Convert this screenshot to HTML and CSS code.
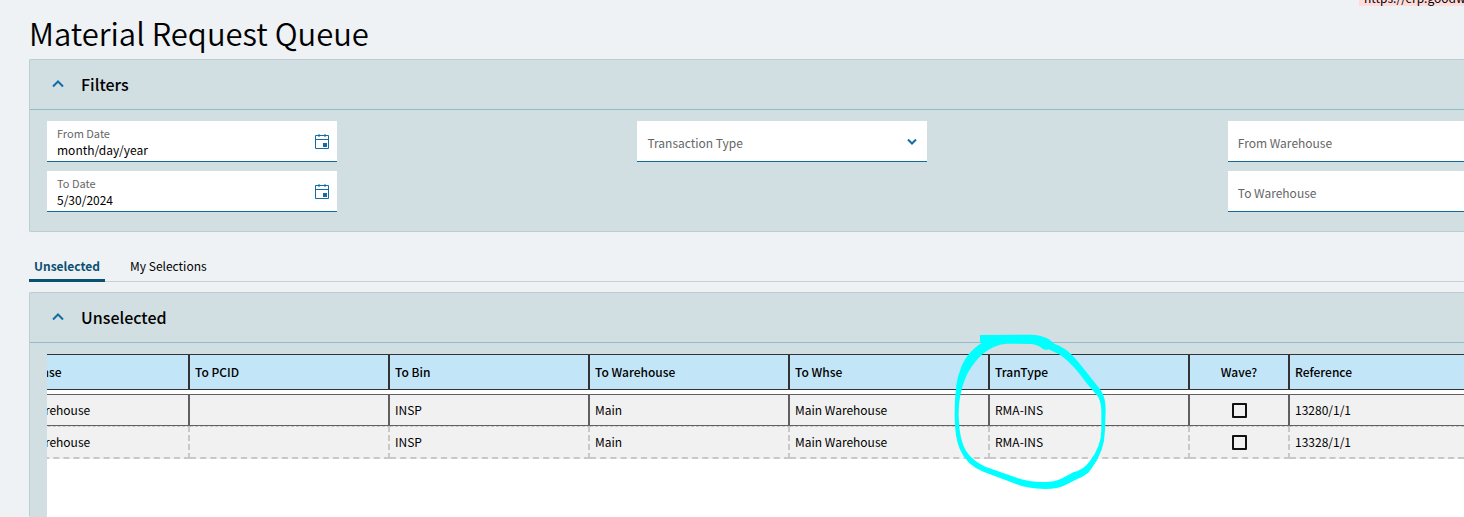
FILE: index.html
```html
<!DOCTYPE html>
<html lang="en">
<head>
  <meta charset="UTF-8">
  <title>Material Request Queue</title>
  <link rel="stylesheet" href="styles.css">
</head>
<body>
  <div class="env-banner">https://erp.goodway</div>

  <main class="page">
    <h1>Material Request Queue</h1>

    <!-- Filters -->
    <section class="panel">
      <header class="panel-header">
        <button type="button" class="collapse-btn" aria-label="Collapse Filters">
          <svg width="12" height="8" viewBox="0 0 12 8"><path d="M1 6.5 6 1.5 11 6.5"/></svg>
        </button>
        <h2>Filters</h2>
      </header>
      <form class="filters">
        <div class="filter-col">
          <div class="field">
            <label for="fromDate">From Date</label>
            <input type="text" id="fromDate" value="month/day/year">
            <button type="button" class="field-btn" aria-label="Pick from date">
              <svg width="14" height="15" viewBox="0 0 14 15"><path d="M.5 1.5h13v13H.5zM.5 5.5h13M4 0v3M10 0v3"/><rect x="8" y="9" width="4" height="4"/></svg>
            </button>
          </div>
          <div class="field">
            <label for="toDate">To Date</label>
            <input type="text" id="toDate" value="5/30/2024">
            <button type="button" class="field-btn" aria-label="Pick to date">
              <svg width="14" height="15" viewBox="0 0 14 15"><path d="M.5 1.5h13v13H.5zM.5 5.5h13M4 0v3M10 0v3"/><rect x="8" y="9" width="4" height="4"/></svg>
            </button>
          </div>
        </div>
        <div class="filter-col">
          <div class="field field-empty">
            <select id="tranType" aria-label="Transaction Type">
              <option>Transaction Type</option>
            </select>
            <svg class="caret" width="10" height="6" viewBox="0 0 10 6"><path d="M1 .5 5 4.5 9 .5"/></svg>
          </div>
        </div>
        <div class="filter-col filter-col-last">
          <div class="field field-empty">
            <input type="text" id="fromWarehouse" placeholder="From Warehouse" aria-label="From Warehouse">
          </div>
          <div class="field field-empty">
            <input type="text" id="toWarehouse" placeholder="To Warehouse" aria-label="To Warehouse">
          </div>
        </div>
      </form>
    </section>

    <!-- Tabs -->
    <nav class="tabs">
      <a href="#unselected" class="tab active">Unselected</a>
      <a href="#my-selections" class="tab">My Selections</a>
    </nav>

    <!-- Grid -->
    <section class="panel panel-fill" id="unselected">
      <header class="panel-header">
        <button type="button" class="collapse-btn" aria-label="Collapse Unselected">
          <svg width="12" height="8" viewBox="0 0 12 8"><path d="M1 6.5 6 1.5 11 6.5"/></svg>
        </button>
        <h2>Unselected</h2>
      </header>
      <div class="grid">
        <table>
          <colgroup>
            <col class="col-first"><col class="col"><col class="col"><col class="col"><col class="col"><col class="col">
            <col class="col-check"><col>
          </colgroup>
          <thead>
            <tr>
              <th>From Whse</th>
              <th>To PCID</th>
              <th>To Bin</th>
              <th>To Warehouse</th>
              <th>To Whse</th>
              <th>TranType</th>
              <th class="center">Wave?</th>
              <th>Reference</th>
            </tr>
          </thead>
          <tbody>
            <tr class="spacer"><td colspan="8"></td></tr>
            <tr class="current">
              <td>Main Warehouse</td>
              <td></td>
              <td>INSP</td>
              <td>Main</td>
              <td>Main Warehouse</td>
              <td>RMA-INS</td>
              <td class="center"><input type="checkbox" aria-label="Wave 13280/1/1"></td>
              <td>13280/1/1</td>
            </tr>
            <tr>
              <td>Main Warehouse</td>
              <td></td>
              <td>INSP</td>
              <td>Main</td>
              <td>Main Warehouse</td>
              <td>RMA-INS</td>
              <td class="center"><input type="checkbox" aria-label="Wave 13328/1/1"></td>
              <td>13328/1/1</td>
            </tr>
          </tbody>
        </table>
      </div>
    </section>
  </main>

  <!-- Marker circle round the TranType column -->
  <svg class="marker" width="200" height="180" viewBox="0 0 600 540">
    <path d="M150 45 300 44Q335 44 357 58L374 72Q410 82 445 126L512 210Q527 232 527 270L525 330Q524 395 484 446Q474 464 442 477L405 496Q385 507 345 507Q290 506 258 492L160 455Q108 434 89 386Q74 350 74 290Q74 190 89 155Q105 100 158 67L150 66ZM230 71Q190 74 155 104Q118 142 106 175Q84 230 86 290Q88 360 108 392Q124 420 166 440L262 474Q300 487 345 486Q372 486 392 477L430 457Q462 448 478 425Q514 380 514 330V270Q512 235 497 222L470 190Q430 132 390 104L356 88Q348 92 338 86Q320 72 300 72Z"/>
  </svg>
</body>
</html>
```
FILE: styles.css
```css
* {
  box-sizing: border-box;
}
body {
  margin: 0;
  background: #eef2f5;
  color: #000;
  font-family: "Noto Sans CJK SC", "Noto Sans", sans-serif;
  font-size: 12px;
  line-height: 16px;
  overflow: hidden;
}
.page {
  display: flex;
  flex-direction: column;
  min-height: 100vh;
  padding-left: 29px;
}
h1 {
  margin: 0;
  padding: 13px 0 6px;
  font-size: 31px;
  line-height: 40px;
  font-weight: 350;
}
h2 {
  margin: 0;
  font-size: 16px;
  line-height: 24px;
  font-weight: 500;
}
.env-banner {
  position: absolute;
  top: 0;
  right: 0;
  display: flex;
  align-items: flex-end;
  width: 105px;
  height: 6px;
  padding-left: 5px;
  overflow: hidden;
  background: #ffdcdc;
  font-size: 12px;
}
.panel {
  background: #d1dee2;
  border: 1px solid #bccdd1;
  border-right: none;
  border-radius: 2px 0 0 2px;
}
.panel-header {
  display: flex;
  align-items: center;
  height: 50px;
  padding: 0 0 1px 18px;
  border-bottom: 1px solid #91bdc6;
}
.collapse-btn {
  display: flex;
  align-items: center;
  justify-content: center;
  width: 20px;
  height: 20px;
  margin-right: 13px;
  padding: 0;
  border: none;
  background: none;
  cursor: pointer;
}
svg path {
  fill: none;
  stroke: #136ca3;
}
.collapse-btn path,
.caret path {
  stroke-width: 2;
}
.filters {
  display: grid;
  grid-template-columns: 5fr 5fr 2fr;
  padding: 11px 0 19px 17px;
}
.filter-col {
  display: flex;
  flex-direction: column;
  gap: 9px;
  width: 290px;
}
.filter-col-last {
  width: auto;
}
.field {
  position: relative;
  display: flex;
  flex-direction: column;
  height: 41px;
  padding: 4px 10px 0;
  background: #fff;
  border-bottom: 1px solid #136c96;
}
.field label {
  margin-bottom: 1px;
  color: #666;
  font-size: 11px;
}
.field input,
.field select {
  width: 100%;
  height: 16px;
  padding: 0;
  border: none;
  outline: none;
  appearance: none;
  background: none;
  color: #000;
  font: inherit;
}
.field-empty input,
.field-empty select {
  height: 34px;
  color: #666;
}
.field-empty select {
  height: 36px;
}
.field-empty input::placeholder {
  color: #666;
  opacity: 1;
}
.field-btn {
  position: absolute;
  top: 13px;
  right: 8px;
  display: flex;
  padding: 0;
  border: none;
  background: none;
  cursor: pointer;
}
.field-btn rect {
  fill: #136ca3;
}
.caret {
  position: absolute;
  top: 18px;
  right: 10px;
  pointer-events: none;
}
.tabs {
  display: flex;
  gap: 20px;
  margin-top: 20px;
  border-bottom: 1px solid #c8d0d4;
}
.tab {
  height: 30px;
  margin-bottom: -1px;
  padding: 6px 5px 0;
  color: #000;
  text-decoration: none;
}
.tab.active {
  border-bottom: 3px solid #0b4f71;
  color: #0b4f71;
  font-weight: 700;
}
.panel-fill {
  display: flex;
  flex-direction: column;
  flex: 1;
  margin-top: 10px;
  border-bottom: none;
}
.grid {
  flex: 1;
  margin: 11px 0 0 17px;
  overflow: hidden;
  background: #fff;
}
/* scrolled sideways, the first column is cut at the left */
table {
  width: calc(100% + 54px);
  margin-left: -54px;
  border-collapse: separate;
  border-spacing: 0;
  table-layout: fixed;
}
.col {
  width: 200px;
}
.col-first {
  width: 197px;
}
.col-check {
  width: 100px;
}
th {
  height: 36px;
  padding: 0 5px;
  background: #c2e5f7;
  border: solid #333;
  border-width: 1px 2px 1px 0;
  font-weight: 500;
  text-align: left;
}
td {
  height: 33px;
  padding: 0 5px;
  background: #f1f1f1;
  border: dashed #c8c8c8;
  border-width: 1px 2px 2px 0;
}
.current td {
  height: 32px;
  border: solid #606060;
  border-width: 1px 2px 1px 0;
}
.spacer td {
  height: 4px;
  padding: 0;
  background: #fff;
  border: none;
}
th:last-child,
td:last-child,
.current td:last-child {
  border-right: none;
}
.center {
  text-align: center;
}
td input {
  display: block;
  width: 15px;
  height: 15px;
  margin: 0 auto;
  appearance: none;
  border: 2px solid #111;
  border-radius: 1px;
}
.marker {
  position: absolute;
  left: 930px;
  top: 320px;
  pointer-events: none;
}
.marker path {
  fill: #00ffff;
  fill-rule: evenodd;
  stroke: none;
}
```
